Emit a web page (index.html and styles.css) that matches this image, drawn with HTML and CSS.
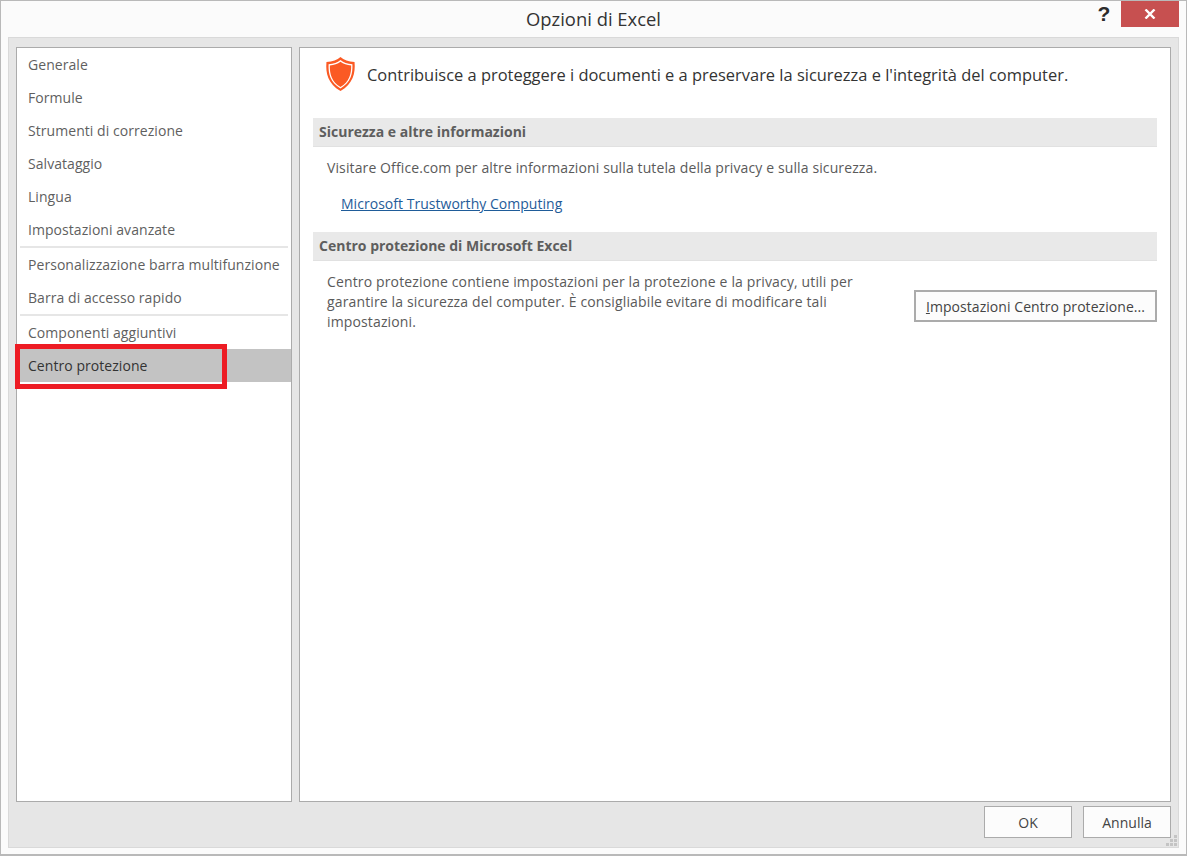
FILE: index.html
```html
<!DOCTYPE html>
<html lang="it">
<head>
<meta charset="utf-8">
<title>Opzioni di Excel</title>
<link rel="stylesheet" href="styles.css">
</head>
<body>
<div class="window">
  <header class="titlebar">
    <h1 class="title">Opzioni di Excel</h1>
    <span class="help">?</span>
    <span class="close">
      <svg width="12" height="10" viewBox="0 0 12 10"><path d="M1.5 0.5 L10.5 9.5 M10.5 0.5 L1.5 9.5" stroke="#fff" stroke-width="2.4" fill="none"/></svg>
    </span>
  </header>
  <div class="client">
    <div class="panes">
      <nav class="nav">
        <div class="nav-item">Generale</div>
        <div class="nav-item">Formule</div>
        <div class="nav-item">Strumenti di correzione</div>
        <div class="nav-item">Salvataggio</div>
        <div class="nav-item">Lingua</div>
        <div class="nav-item">Impostazioni avanzate</div>
        <div class="nav-sep"></div>
        <div class="nav-item">Personalizzazione barra multifunzione</div>
        <div class="nav-item">Barra di accesso rapido</div>
        <div class="nav-sep"></div>
        <div class="nav-item">Componenti aggiuntivi</div>
        <div class="nav-item selected">Centro protezione</div>
        <div class="highlight"></div>
      </nav>
      <main class="content">
        <div class="intro">
          <svg class="shield" width="31" height="36" viewBox="0 0 32 36">
            <path d="M16 0.5 C19.5 3.5 24 5.3 30.5 5.5 C31.5 17 29 28 16 35.5 C3 28 0.5 17 1.5 5.5 C8 5.3 12.5 3.5 16 0.5 Z" fill="#fb5a24"/>
            <path d="M16 3.6 C19.3 6.2 23 7.5 28.3 7.9 C28.8 17.5 26.5 26.8 16 32.9 C5.5 26.8 3.2 17.5 3.7 7.9 C9 7.5 12.7 6.2 16 3.6 Z" fill="#fff"/>
            <path d="M16 5.4 C19 7.7 22.6 9 27 9.2 C27.2 18 25 26.2 16 31.4 C7 26.2 4.8 18 5 9.2 C9.4 9 13 7.7 16 5.4 Z" fill="#fb5a24"/>
          </svg>
          <p class="intro-text">Contribuisce a proteggere i documenti e a preservare la sicurezza e l'integrità del computer.</p>
        </div>
        <h2 class="section-head first">Sicurezza e altre informazioni</h2>
        <p class="line">Visitare Office.com per altre informazioni sulla tutela della privacy e sulla sicurezza.</p>
        <a class="link" href="#">Microsoft Trustworthy Computing</a>
        <h2 class="section-head second">Centro protezione di Microsoft Excel</h2>
        <div class="trust">
          <p class="trust-text">Centro protezione contiene impostazioni per la protezione e la privacy, utili per garantire la sicurezza del computer. È consigliabile evitare di modificare tali impostazioni.</p>
          <button class="btn trust-btn"><u>I</u>mpostazioni Centro protezione...</button>
        </div>
      </main>
    </div>
    <footer class="footer">
      <button class="btn foot-btn">OK</button>
      <button class="btn foot-btn">Annulla</button>
      <svg class="grip" width="11" height="11" viewBox="0 0 11 11" fill="#c4c4c4">
        <rect x="8" y="0" width="3" height="3"/><rect x="4" y="4" width="3" height="3"/><rect x="8" y="4" width="3" height="3"/><rect x="0" y="8" width="3" height="3"/><rect x="4" y="8" width="3" height="3"/><rect x="8" y="8" width="3" height="3"/>
      </svg>
    </footer>
  </div>
</div>
</body>
</html>
```

FILE: styles.css
```css
* { box-sizing: border-box; }
html, body { margin: 0; padding: 0; }
body {
  width: 1187px;
  height: 856px;
  overflow: hidden;
  font-family: "Open Sans", "Noto Sans", sans-serif;
  font-size: 14px;
  color: #444;
  background: #fff;
}
.window {
  width: 1187px;
  height: 856px;
  background: #fbfbfb;
  border: 1px solid #b9b9b9;
  border-bottom-width: 2px;
  padding: 0 7px 7px;
  display: flex;
  flex-direction: column;
}
.titlebar {
  height: 36px;
  flex: none;
  position: relative;
  display: flex;
  justify-content: center;
}
.title {
  margin: 6px 0 0;
  font-size: 18.4px;
  font-weight: 400;
  line-height: 24px;
  color: #333;
}
.help {
  position: absolute;
  left: 1082px;
  top: 1px;
  width: 28px;
  text-align: center;
  font: 700 21px/24px "Liberation Sans", sans-serif;
  color: #2b2b2b;
}
.close {
  position: absolute;
  left: 1113px;
  top: 0;
  width: 58px;
  height: 26px;
  background: #c75050;
  display: flex;
  align-items: center;
  justify-content: center;
}
.client {
  flex: 1;
  background: #e6e6e6;
  border: 1px solid #d9d9d9;
  padding: 9px 7px 9px 7px;
  display: flex;
  flex-direction: column;
  position: relative;
}
.panes {
  display: flex;
  gap: 7px;
  height: 755px;
  flex: none;
}
.nav {
  width: 276px;
  flex: none;
  background: #fff;
  border: 1px solid #ababab;
  position: relative;
}
.nav-item {
  height: 33px;
  line-height: 34px;
  padding-left: 11px;
  color: #5f5f5f;
  font-size: 14px;
  letter-spacing: 0.055px;
  white-space: nowrap;
}
.nav-item.selected {
  background: #c3c3c3;
  color: #333;
}
.nav-sep {
  height: 2px;
  margin: 0 3px;
  background: #e6e6e6;
}
.highlight {
  position: absolute;
  left: -2px;
  top: 296px;
  width: 212px;
  height: 45px;
  border: 5px solid #ed1c24;
}
.content {
  width: 872px;
  flex: none;
  background: #fff;
  border: 1px solid #ababab;
  padding: 0 13px;
}
.intro {
  display: flex;
  align-items: center;
  height: 70px;
  padding-left: 12px;
  gap: 11px;
}
.shield { flex: none; margin-top: -18px; }
.intro-text {
  margin: -16px 0 0;
  font-size: 16.45px;
  line-height: 24px;
  color: #333;
  white-space: nowrap;
}
.section-head {
  margin: 0;
  height: 29px;
  line-height: 27px;
  padding-left: 6px;
  font-size: 14px;
  font-weight: 700;
  color: #5e5e5e;
  background: #e9e9e9;
  border-bottom: 1px solid #e1e1e1;
}
.line {
  margin: 11px 0 0 14px;
  line-height: 20px;
  color: #5a5a5a;
  letter-spacing: 0.115px;
}
.link {
  display: inline-block;
  margin: 16px 0 0 28px;
  line-height: 20px;
  color: #1f5c99;
  letter-spacing: 0.03px;
}
.section-head.second { margin-top: 18px; }
.trust {
  display: flex;
  justify-content: space-between;
  padding-left: 14px;
}
.trust-text {
  margin: 11px 0 0;
  width: 540px;
  line-height: 20px;
  color: #5a5a5a;
  letter-spacing: 0.14px;
}
.btn {
  font: inherit;
  background: #fcfcfc;
  color: #444;
  padding: 0;
}
.trust-btn {
  width: 243px;
  height: 32px;
  margin-top: 29px;
  border: 2px solid #ababab;
  white-space: nowrap;
  letter-spacing: 0.06px;
}
.footer {
  display: flex;
  justify-content: flex-end;
  gap: 11px;
  margin-top: 4px;
}
.foot-btn {
  width: 88px;
  height: 32px;
  border: 1px solid #ababab;
}
.grip {
  position: absolute;
  right: 1px;
  bottom: 1px;
}
```
